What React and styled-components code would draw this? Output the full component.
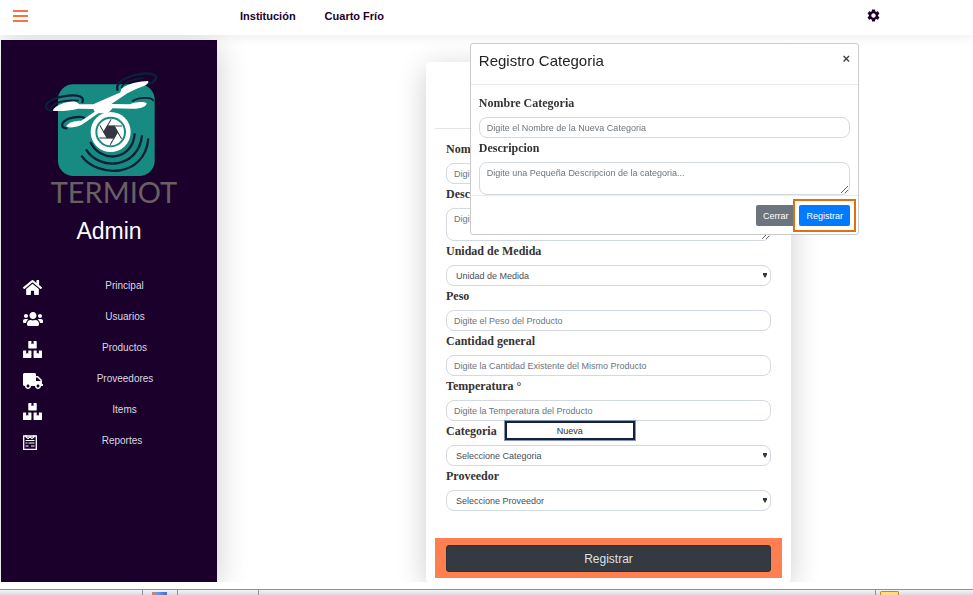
import React from 'react';
import styled, { createGlobalStyle } from 'styled-components';
import { FaHome, FaUsers, FaBoxes, FaTruck } from 'react-icons/fa';
import { MdSettings } from 'react-icons/md';

const sans = '"Liberation Sans", Arial, sans-serif';
const serif = '"Liberation Serif", "Times New Roman", serif';

const GlobalStyle = createGlobalStyle`
  * { box-sizing: border-box; }
  body { margin: 0; background: #fff; font-family: ${sans}; color: #212529; overflow: hidden; }
  button, input, select, textarea { font-family: inherit; }
`;

const Page = styled.div`
  display: flex;
  flex-direction: column;
  height: 100vh;
`;

const Header = styled.header`
  display: flex;
  flex: none;
  align-items: center;
  height: 35px;
  padding: 0 92px 4px 13px;
  box-shadow: 0 2px 12px rgba(0, 0, 0, 0.07);
`;

const IconButton = styled.button`
  display: flex;
  padding: 0;
  border: 0;
  background: none;
  color: ${(p) => p.$color};
  cursor: pointer;
`;

const Nav = styled.nav`
  display: flex;
  flex: 1;
  gap: 29px;
  padding: 1px 0 0 212px;
`;

const NavLink = styled.a`
  color: #1b002c;
  font-size: 11px;
  font-weight: bold;
  line-height: 18px;
  text-decoration: none;
`;

const Body = styled.div`
  display: flex;
  flex: 1;
  min-height: 0;
  margin-bottom: 7px;
  overflow: hidden;
`;

const Sidebar = styled.aside`
  flex: none;
  width: 216px;
  margin: 5px 0 0 1px;
  padding-top: 32px;
  background: #1b002c;
  color: #fff;
  box-shadow: 0 6px 30px rgba(0, 0, 0, 0.2);
`;

const Brand = styled.div`
  display: flex;
  flex-direction: column;
  align-items: center;
`;

const BrandName = styled.span`
  padding-left: 10px;
  color: #686062;
  font-family: Lato, sans-serif;
  font-size: 29px;
  font-weight: 400;
  line-height: 32px;
`;

const UserName = styled.h1`
  margin: 7px 0 25px;
  font-size: 23px;
  font-weight: normal;
  line-height: 32px;
`;

const Menu = styled.ul`
  display: flex;
  flex-direction: column;
  margin: 0;
  padding: 0 10px 0 22px;
  list-style: none;
`;

const MenuLink = styled.a`
  display: flex;
  align-items: center;
  height: 31px;
  color: #fff;
  text-decoration: none;
`;

const MenuText = styled.span`
  flex: 1;
  padding-bottom: 3px;
  color: #dcd8e0;
  font-size: 10px;
  line-height: 14px;
  text-align: center;
`;

const Main = styled.main`
  display: grid;
  flex: 1;
  grid-template-columns: 209fr 365fr 182fr;
  padding-top: 27px;
`;

const Card = styled.form`
  display: flex;
  flex-direction: column;
  grid-column: 2;
  padding: 0 9px;
  border-radius: 4px;
  background: #fff;
  box-shadow: 0 6px 30px rgba(0, 0, 0, 0.2);
`;

const CardHead = styled.div`
  height: 67px;
  border-bottom: 1px solid #e4e4e6;
`;

const CardFields = styled.div`
  flex: 1;
  padding: 10px 11px 0;
`;

const CardFooter = styled.div`
  display: flex;
  margin-bottom: 4px;
  padding: 7px 11px 6px;
  background: #ff7f50;
`;

const SubmitButton = styled.button`
  flex: 1;
  height: 27px;
  border: 1px solid #2d3237;
  border-radius: 3px;
  background: #343a40;
  color: #dfe1e3;
  font-size: 12px;
`;

const LabelRow = styled.div`
  display: flex;
  gap: 8px;
  height: 24px;
`;

const Label = styled.label`
  color: #333;
  font-family: ${serif};
  font-size: 12px;
  font-weight: bold;
  line-height: 20px;
`;

const Input = styled.input`
  display: block;
  width: 100%;
  height: 21px;
  padding: 0 7px;
  border: 1px solid #d3d9e0;
  border-radius: 8px;
  background: #fff;
  color: #495057;
  font-size: 9px;
  &::placeholder { color: #6c757d; }
`;

const TextArea = styled(Input).attrs({ as: 'textarea' })`
  height: 33px;
  padding: 4px 7px;
  line-height: 12px;
  resize: vertical;
`;

const SelectBox = styled.div`
  display: grid;
  align-items: center;
  & > * { grid-area: 1 / 1; }
  & > svg { justify-self: end; margin-right: 4px; pointer-events: none; }
`;

const Select = styled(Input).attrs({ as: 'select' })`
  padding: 0 9px;
  appearance: none;
`;

const NewButton = styled.button`
  width: 130px;
  height: 19px;
  padding: 0;
  border: 2px solid #14203c;
  outline: 1px solid #8494b4;
  background: #fff;
  color: #333;
  font-size: 9px;
`;

const Overlay = styled.div`
  position: fixed;
  inset: 43px 114px auto auto;
  width: 40%;
  pointer-events: none;
`;

const Dialog = styled.form`
  border: 1px solid #c9cbcd;
  border-radius: 3px;
  background: #fff;
  pointer-events: auto;
`;

const DialogHead = styled.div`
  display: flex;
  align-items: flex-start;
  justify-content: space-between;
  height: 41px;
  padding: 7px 8px;
  border-bottom: 1px solid #e9ecef;
`;

const DialogTitle = styled.h2`
  margin: 0;
  font-size: 15px;
  font-weight: normal;
  line-height: 20px;
`;

const CloseButton = styled.button`
  padding: 0;
  border: 0;
  background: none;
  color: #444;
  font-size: 13px;
  font-weight: bold;
  line-height: 16px;
`;

const DialogFields = styled.div`
  padding: 8px 8px 0;
`;

const DialogFooter = styled.div`
  display: flex;
  justify-content: flex-end;
  gap: 4px;
  padding: 9px 8px 8px;
  border-top: 1px solid #e9ecef;
`;

const Highlight = styled.div`
  display: flex;
  outline: 2px solid #dd6f14;
  outline-offset: 4px;
`;

const ActionButton = styled.button`
  height: 21px;
  padding: 0 7px;
  border: 0;
  border-radius: 2px;
  background: ${(p) => (p.$primary ? '#007bff' : '#6c757d')};
  color: #fff;
  font-size: 9px;
`;

const TaskBar = styled.footer`
  display: grid;
  flex: none;
  grid-template-columns: 143px 35px 81px 1fr 97px;
  height: 6px;
  border-top: 1px solid #8b9296;
  background: linear-gradient(#f2f4f6, #d7dce2);
`;

const TaskCell = styled.div`
  display: flex;
  padding: 2px 9px 0;
  border-right: 1px solid #8f9498;
  &:last-child { padding: 1px 4px 0; border-right: 0; }
`;

const TaskIcon = styled.span`
  width: 15px;
  height: 4px;
  background: linear-gradient(90deg, #e08060, #5b9bf0 40%, #3a6fd8);
`;

const TaskHighlight = styled.span`
  width: 19px;
  height: 4px;
  border: 1px solid #c08a2a;
  border-bottom: 0;
  border-radius: 2px 2px 0 0;
  background: #ffdf70;
`;

function MenuIcon() {
  return (
    <svg width="15" height="14" viewBox="0 0 15 14" aria-hidden="true">
      <path d="M0 2h15M0 7h15M0 12h15" stroke="#ff7043" strokeWidth="2" />
    </svg>
  );
}

function ReportIcon() {
  return (
    <svg width="14" height="15" viewBox="0 0 14 15" fill="none" stroke="#fff" aria-hidden="true">
      <path d="M.7 1h12.6v13.3H.7z" strokeWidth="1.3" />
      <path d="M3 0v2l2 1.5L7 2l2 1.5L11 2V0M2.5 5.500h9M2.500 8h2M5.500 8h6M2.500 11h3M8 11h3.500" strokeWidth="1.1" />
    </svg>
  );
}

function Arrow() {
  return (
    <svg width="4" height="5" viewBox="0 0 4 5" aria-hidden="true">
      <path d="M0 0h4v1.500L2.500 4.500h-1L0 1.500z" fill="#343a40" />
    </svg>
  );
}

function DroneLogo() {
  const blades = [0, 60, 120, 180, 240, 300];
  return (
    <svg width="136" height="104" viewBox="33 36 408 312" role="img" aria-label="Drone">
      <rect x="84" y="73" width="290" height="275" rx="46" fill="#178b82" />
      <g fill="none" stroke="#0a2038" strokeWidth="7">
        <path d="M264 92C252 72 285 50 325 43s60 2 52 14-15 13-22 16" />
        <path d="M274 84C276 70 305 58 340 54" strokeWidth="5" />
        <path d="M66 153C30 146 50 118 100 109s66 4 56 20" />
        <path d="M62 146c6-18 40-28 84-24" strokeWidth="5" />
        <path d="M112 205c-30-2-14-26 16-32s40 0 36 8" />
        <path d="M306 124c20-14 64-14 64 0" strokeWidth="5" />
        <path d="M154 287c46 66 190 70 201-52M168 268c40 66 158 58 168-42M181 246c32 66 128 56 133-26" />
      </g>
      <path
        fill="#fff"
        d="M190 133L212 123 272 97C270 82 300 66 354 63 360 71 342 79 320 86L292 100 244 132 300 133C315 124 343 124 350 129 350 141 325 148 305 146L248 145C242 150 240 156 230 160L205 160 162 190C148 202 122 205 109 200 112 188 132 182 154 182L194 155 190 147 145 146C120 152 86 155 68 152 75 136 110 123 135 125 143 127 145 131 148 133Z"
      />
      <circle cx="242" cy="216" r="60" fill="#fff" />
      <circle cx="242" cy="216" r="43" fill="none" stroke="#178b82" strokeWidth="6" />
      <g stroke="#343842" strokeWidth="3" fill="none">
        {blades.map((a) => (
          <path key={a} d="M231 198h45" transform={`rotate(${a} 242 216)`} />
        ))}
      </g>
      <path d="M231 197h22l11 19-11 19h-22l-11-19z" fill="#343842" />
    </svg>
  );
}

const menu = [
  ['Principal', <FaHome size={19} />],
  ['Usuarios', <FaUsers size={20} />],
  ['Productos', <FaBoxes size={19} />],
  ['Proveedores', <FaTruck size={20} />],
  ['Items', <FaBoxes size={19} />],
  ['Reportes', <ReportIcon />],
];

function Field({ id, label, hint, area, options, action }) {
  return (
    <div>
      <LabelRow>
        <Label htmlFor={id}>{label}</Label>
        {action}
      </LabelRow>
      {options ? (
        <SelectBox>
          <Select id={id}>
            {options.map((o) => <option key={o}>{o}</option>)}
          </Select>
          <Arrow />
        </SelectBox>
      ) : area ? (
        <TextArea id={id} placeholder={hint} />
      ) : (
        <Input id={id} placeholder={hint} />
      )}
    </div>
  );
}

export default function App() {
  return (
    <Page>
      <GlobalStyle />
      <Header>
        <IconButton type="button" aria-label="Menú" $color="#ff7043"><MenuIcon /></IconButton>
        <Nav>
          <NavLink href="#institucion">Institución</NavLink>
          <NavLink href="#cuarto-frio">Cuarto Frío</NavLink>
        </Nav>
        <IconButton type="button" aria-label="Ajustes" $color="#1b002c"><MdSettings size={15} /></IconButton>
      </Header>
      <Body>
        <Sidebar>
          <Brand>
            <DroneLogo />
            <BrandName>TERMIOT</BrandName>
            <UserName>Admin</UserName>
          </Brand>
          <Menu>
            {menu.map(([text, icon]) => (
              <li key={text}>
                <MenuLink href={`#${text.toLowerCase()}`}>
                  {icon}
                  <MenuText>{text}</MenuText>
                </MenuLink>
              </li>
            ))}
          </Menu>
        </Sidebar>
        <Main>
          <Card>
            <CardHead />
            <CardFields>
              <Field id="nombre" label="Nombre" hint="Digite el Nombre del Producto" />
              <Field id="descripcion" label="Descripcion" hint="Digite una Descripcion del Producto" area />
              <Field id="unidad" label="Unidad de Medida" options={['Unidad de Medida']} />
              <Field id="peso" label="Peso" hint="Digite el Peso del Producto" />
              <Field id="cantidad" label="Cantidad general" hint="Digite la Cantidad Existente del Mismo Producto" />
              <Field id="temperatura" label="Temperatura °" hint="Digite la Temperatura del Producto" />
              <Field
                id="categoria"
                label="Categoria"
                options={['Seleccione Categoria']}
                action={<NewButton type="button">Nueva</NewButton>}
              />
              <Field id="proveedor" label="Proveedor" options={['Seleccione Proveedor']} />
            </CardFields>
            <CardFooter>
              <SubmitButton type="button">Registrar</SubmitButton>
            </CardFooter>
          </Card>
        </Main>
      </Body>
      <TaskBar>
        <TaskCell />
        <TaskCell><TaskIcon /></TaskCell>
        <TaskCell />
        <TaskCell />
        <TaskCell><TaskHighlight /></TaskCell>
      </TaskBar>
      <Overlay>
        <Dialog role="dialog" aria-labelledby="dialog-title">
          <DialogHead>
            <DialogTitle id="dialog-title">Registro Categoria</DialogTitle>
            <CloseButton type="button" aria-label="Cerrar ventana">×</CloseButton>
          </DialogHead>
          <DialogFields>
            <Field id="nueva-nombre" label="Nombre Categoria" hint="Digite el Nombre de la Nueva Categoria" />
            <Field id="nueva-descripcion" label="Descripcion" hint="Digite una Pequeña Descripcion de la categoria..." area />
          </DialogFields>
          <DialogFooter>
            <ActionButton type="button">Cerrar</ActionButton>
            <Highlight>
              <ActionButton type="button" $primary>Registrar</ActionButton>
            </Highlight>
          </DialogFooter>
        </Dialog>
      </Overlay>
    </Page>
  );
}
